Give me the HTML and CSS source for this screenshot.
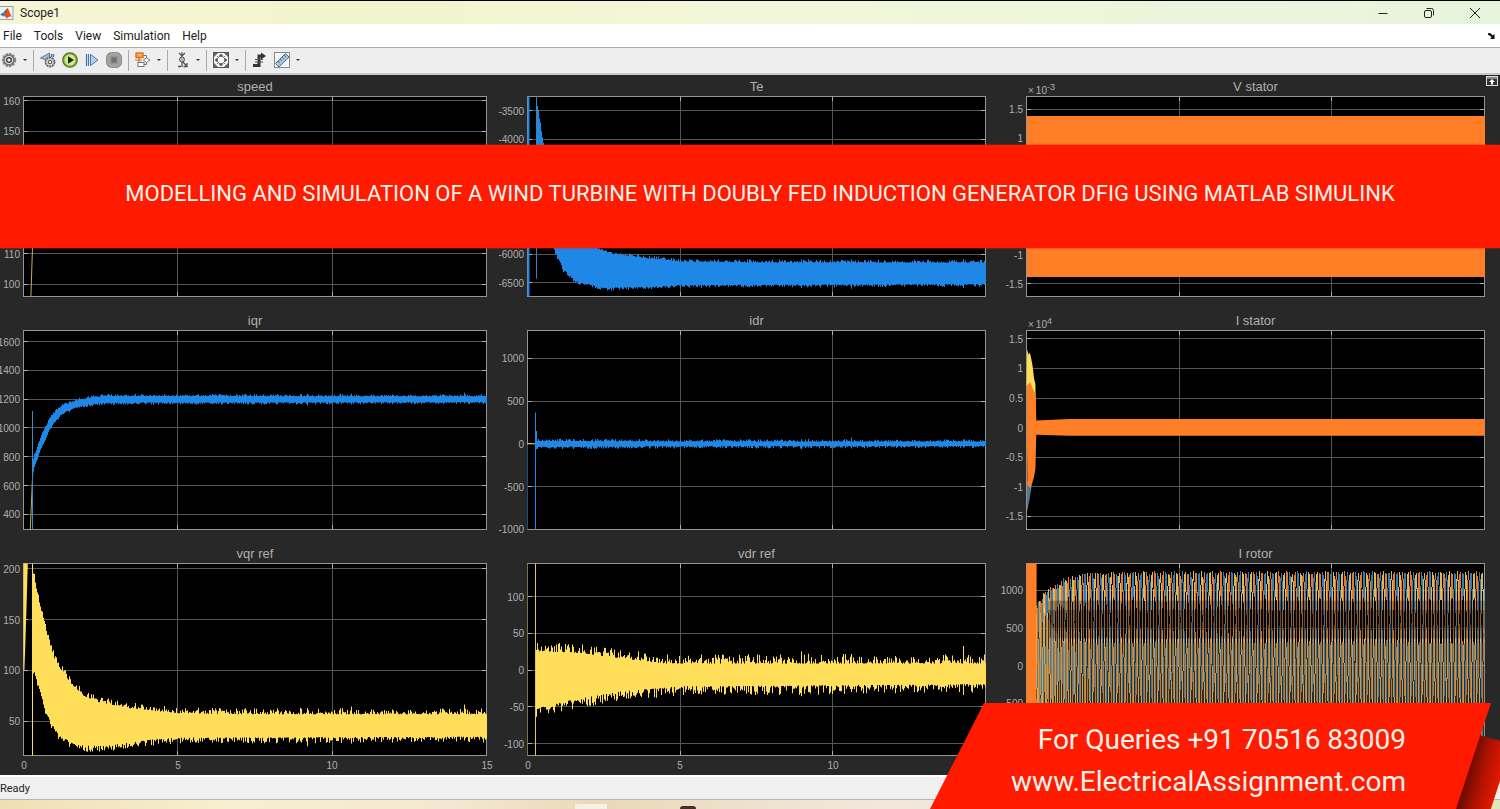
FILE: index.html
```html
<!DOCTYPE html>
<html lang="en">
<head>
<meta charset="utf-8">
<title>Scope1</title>
<link rel="stylesheet" href="styles.css">
</head>
<body>
<div class="window">
  <header class="titlebar">
    <svg class="app-icon" viewBox="0 0 14 14" aria-hidden="true"><rect x="-1" y=".5" width="14" height="13" fill="#eef2f6" stroke="#8fa3b8"/><path d="M0 8.500L4 6l2 2-2.500 2.500z" fill="#3d7fc0"/><path d="M4 6l3.500-4L6 8z" fill="#6b3a2a"/><path d="M7.500 2c1.500 1.500 2.500 6 4.500 9-2-1-3-.5-5 1.500L4 9.500z" fill="#d9541e"/></svg>
    <h1 class="window-title">Scope1</h1>
    <div class="window-controls">
      <button class="control" aria-label="Minimize"><svg viewBox="0 0 12 12"><path d="M1.500 6.500h9"/></svg></button>
      <button class="control" aria-label="Restore"><svg viewBox="0 0 12 12"><rect x="1.500" y="3.500" width="7" height="7" rx="1.500"/><path d="M3.500 1.500h5a2 2 0 0 1 2 2v5"/></svg></button>
      <button class="control" aria-label="Close"><svg viewBox="0 0 12 12"><path d="M1 1l10 10M11 1L1 11"/></svg></button>
    </div>
  </header>
  <nav class="menubar">
    <button class="menu">File</button>
    <button class="menu">Tools</button>
    <button class="menu">View</button>
    <button class="menu">Simulation</button>
    <button class="menu">Help</button>
    <button class="dock" aria-label="Dock window"><svg viewBox="0 0 8 8"><path d="M0 1.500c2-1 3.500 0 4.500 2L6.500 2v5H2l1.500-1.500C2.500 4 1.500 3 0 3z" fill="#111"/></svg></button>
  </nav>
  <div class="toolbar" role="toolbar" aria-label="Scope tools">
    <button class="tool" aria-label="Configuration"><svg viewBox="0 0 16 16" fill="none"><circle cx="8" cy="8" r="6.300" stroke="#888" stroke-width="1.800" stroke-dasharray="2.600 1"/><circle cx="8" cy="8" r="5" fill="#ddd" stroke="#6a6a6a" stroke-width="1.500"/><circle cx="8" cy="8" r="2.300" fill="#f4f4f4" stroke="#444" stroke-width="1.400"/></svg></button>
    <button class="caret" aria-label="Configuration options"></button>
    <span class="divider"></span>
    <button class="tool" aria-label="Step back options"><svg viewBox="0 0 16 16" fill="none"><path d="M9.500 1v8L.5 6z" fill="#9dbbd8" stroke="#557b9e"/><path d="M11.500 2v3M13.500 2v3" stroke="#557b9e" stroke-width="1.500"/><circle cx="10" cy="10" r="4.500" fill="#ddd" stroke="#666" stroke-width="1.800" stroke-dasharray="2.200 .6"/><circle cx="10" cy="10" r="1.800" fill="#fff" stroke="#444"/></svg></button>
    <button class="tool" aria-label="Run"><svg viewBox="0 0 16 16"><circle cx="8" cy="8" r="7.200" fill="#8db53c" stroke="#59751f" stroke-width="1.300"/><circle cx="8" cy="8" r="5.400" fill="#d3e7a0"/><path d="M6 4.300v7.400L12 8z" fill="#1c2b10"/></svg></button>
    <button class="tool" aria-label="Step forward"><svg viewBox="0 0 16 16"><path d="M2.500 2v12M4.500 2v12" stroke="#4478ad" stroke-width="1.200"/><path d="M6.500 2.500v11L14 8z" fill="#b6d3ee" stroke="#4478ad"/></svg></button>
    <button class="tool" aria-label="Stop" disabled><svg viewBox="0 0 16 16"><rect x=".5" y=".5" width="15" height="15" rx="5" fill="#a2a2a2" stroke="#8c8c8c"/><rect x="5" y="5" width="6" height="6" fill="#707070" stroke="#8d8d8d"/></svg></button>
    <span class="divider"></span>
    <button class="tool" aria-label="Highlight block"><svg viewBox="0 0 16 16" fill="none"><path d="M8 3.500h3.500v3M9 12.500h2.500V10" stroke="#777"/><rect x="1" y="1" width="7" height="4.500" fill="#f6a75c" stroke="#d9701a" stroke-width="1.300"/><path d="M0 8h7M4 6v4" stroke="#d9701a" stroke-width="1.200"/><path d="M8.500 8l3-2 3.500 2-3.500 2.500z" fill="#fff" stroke="#777"/><rect x="3" y="10.500" width="6" height="4" fill="#fff" stroke="#777"/></svg></button>
    <button class="caret" aria-label="Highlight options"></button>
    <span class="divider"></span>
    <button class="tool" aria-label="Triggers"><svg viewBox="0 0 16 16" fill="none" stroke="#555"><path d="M5 1l3 3 3-3M8 0v5" stroke-width="1.200"/><circle cx="8" cy="7.500" r="2.500" fill="#bbb"/><path d="M8 10v5M4 14.500h3M9 10l4 4.500M13 11v3.500h-3.500" stroke-width="1.300"/></svg></button>
    <button class="caret" aria-label="Trigger options"></button>
    <span class="divider"></span>
    <button class="tool" aria-label="Scale axes"><svg viewBox="0 0 16 16"><rect x=".5" y=".5" width="15" height="15" fill="#f4f4f4" stroke="#555"/><path d="M1 1h4L1 5zM15 1v4l-4-4zM1 15v-4l4 4zM15 15h-4l4-4z" fill="#666"/><path d="M8 2l2 2.500H6zM8 14l2-2.500H6zM2 8l2.500-2v4zM14 8l-2.500-2v4zM4 4l2 2M12 4l-2 2M4 12l2-2M12 12l-2-2" fill="#444" stroke="#666" stroke-width=".8"/></svg></button>
    <button class="caret" aria-label="Scale options"></button>
    <span class="divider"></span>
    <button class="tool" aria-label="Signal measurements"><svg viewBox="0 0 16 16" fill="none"><path d="M1 13.500h6V4h4" stroke="#333" stroke-width="3"/><path d="M9 .5L14 4 9 7.500z" fill="#333"/><path d="M3 7.500h8M3 10h8" stroke="#555"/></svg></button>
    <button class="tool" aria-label="Cursor measurements"><svg viewBox="0 0 16 16"><rect x=".5" y=".5" width="15" height="15" fill="#f5f5f5" stroke="#888"/><path d="M1.500 11.500l10-10 3.500 3.500-10 10z" fill="#a9c4df" stroke="#4c6f92"/><path d="M4 9l2 2M6 7l2 2M8 5l2 2M10 3l2 2" stroke="#4c6f92"/></svg></button>
    <button class="caret" aria-label="Measurement options"></button>
  </div>
  <main class="scope">
    <section class="cell"><h2 class="plot-title">speed</h2><svg class="plot" data-plot="speed" role="img" aria-label="speed"></svg></section>
    <section class="cell"><h2 class="plot-title">Te</h2><svg class="plot" data-plot="te" role="img" aria-label="Te"></svg></section>
    <section class="cell"><h2 class="plot-title">V stator</h2><svg class="plot" data-plot="vstator" role="img" aria-label="V stator"></svg></section>
    <section class="cell"><h2 class="plot-title">iqr</h2><svg class="plot" data-plot="iqr" role="img" aria-label="iqr"></svg></section>
    <section class="cell"><h2 class="plot-title">idr</h2><svg class="plot" data-plot="idr" role="img" aria-label="idr"></svg></section>
    <section class="cell"><h2 class="plot-title">I stator</h2><svg class="plot" data-plot="istator" role="img" aria-label="I stator"></svg></section>
    <section class="cell"><h2 class="plot-title">vqr ref</h2><svg class="plot" data-plot="vqr" role="img" aria-label="vqr ref"></svg></section>
    <section class="cell"><h2 class="plot-title">vdr ref</h2><svg class="plot" data-plot="vdr" role="img" aria-label="vdr ref"></svg></section>
    <section class="cell"><h2 class="plot-title">I rotor</h2><svg class="plot" data-plot="irotor" role="img" aria-label="I rotor"></svg></section>
    <button class="maximize" aria-label="Maximize axes"><svg viewBox="0 0 12 10"><rect x=".5" y=".5" width="11" height="9" fill="#333" stroke="#ddd"/><path d="M1 2h10" stroke="#ddd"/><path d="M6 3l3 3H7v2.500H5V6H3z" fill="#fff"/></svg></button>
    <p class="banner">MODELLING AND SIMULATION OF A WIND TURBINE WITH DOUBLY FED INDUCTION GENERATOR DFIG USING MATLAB SIMULINK</p>
  </main>
  <footer class="statusbar">Ready</footer>
  <div class="taskbar"><span class="task-tile"></span><span class="task-dot"></span></div>
  <aside class="contact">
    <span class="fold"></span>
    <div class="ribbon">
      <p>For Queries +91 70516 83009</p>
      <a href="#">www.ElectricalAssignment.com</a>
    </div>
  </aside>
</div>
<script src="scope.js"></script>
</body>
</html>
```
FILE: styles.css
```css
* { box-sizing: border-box; }
body { margin: 0; overflow: hidden; font-family: Roboto, "Open Sans", sans-serif; font-size: 12px; color: #222; }
h1, h2, p { margin: 0; font-weight: 400; }
button { margin: 0; padding: 0; border: 0; background: none; font: inherit; color: inherit; }
svg { display: block; }

.window { position: relative; display: flex; flex-direction: column; height: 100vh; min-height: 480px; overflow: hidden; }

.titlebar { display: flex; align-items: center; height: 24px; border-top: 1px solid #000; background: linear-gradient(90deg, #f6f5d6, #f1f5cb 22%, #f3f7da 50%, #e6f4dc); }
.app-icon { width: 14px; height: 14px; }
.window-title { margin-left: 6px; font-size: 12px; }
.window-controls { display: flex; gap: 34px; margin-left: auto; padding-right: 19px; }
.control { width: 12px; height: 12px; }
.control svg { width: 12px; height: 12px; fill: none; stroke: #222; }

.menubar { display: flex; align-items: center; gap: 12px; height: 23px; padding: 0 4px 0 3px; background: #fff; }
.dock { width: 8px; height: 8px; margin-left: auto; }

.toolbar { display: flex; align-items: center; gap: 6px; height: 28px; padding: 0 1px 1px; border-top: 1px solid #aaa; border-bottom: 2px solid #c9c9c9; background: #eee; }
.tool, .tool svg { width: 16px; height: 16px; }
.caret { width: 4px; height: 16px; display: grid; place-items: center; }
.caret::before { content: ""; border: 2px solid transparent; border-top-color: #333; border-bottom: 0; }
.divider { width: 1px; height: 21px; background: #aaa; }

.scope { position: relative; flex: 1; min-height: 0; display: grid; grid-template-columns: 464fr 459fr 459fr; grid-template-rows: 218fr 217fr 210fr; gap: 16px 40px; padding: 4px 15px 19px 23px; background: #282828; }
.cell { display: flex; flex-direction: column; min-width: 0; min-height: 0; }
.plot-title { height: 17px; line-height: 16px; text-align: center; font-family: "Liberation Sans", sans-serif; font-size: 13px; color: #afafaf; }
.plot { flex: 1; width: 100%; min-height: 0; overflow: visible; font-family: "Liberation Sans", sans-serif; font-size: 10px; }
.plot text { fill: #afafaf; }
.plot .exponent { font-size: 10px; }
.plot .power { font-size: 9px; }
.maximize { position: absolute; top: 1px; right: 2px; width: 12px; height: 10px; }

.banner { position: absolute; top: 70px; left: 0; right: 0; height: 103px; display: flex; align-items: center; justify-content: center; padding: 0 0 6px 20px; background: #ff1a00; box-shadow: 0 0 2px #ff1a00; color: #fff3ec; font-size: 22px; white-space: nowrap; }

.statusbar { height: 25px; line-height: 23px; border-top: 2px solid #fff; border-bottom: 1px solid #b5b5b5; background: #f0f0f0; font-size: 11px; }
.taskbar { display: flex; align-items: flex-end; height: 9px; background: linear-gradient(90deg, #f0dfb4, #f7efcf 15%, #f4e8d2 30%, #ead9b8 40%, #f0e6d8 55%, #f3efe4 80%, #dfe9b5); }
.task-tile { width: 32px; height: 5px; margin-left: 575px; background: #f8f0e4; }
.task-dot { width: 16px; height: 3px; margin-left: 73px; border-radius: 8px 8px 0 0; background: #4b2c2c; }

.contact { position: absolute; right: 0; bottom: 0; width: 570px; height: 106px; }
.fold { position: absolute; right: 0; bottom: 0; width: 46px; height: 74px; background: linear-gradient(105deg, #6b0a00 35%, #b01200 60%, #e81a00 90%); clip-path: polygon(55% 0, 100% 8%, 100% 62%, 80% 100%, 0 100%); }
.ribbon { position: absolute; left: 0; bottom: 0; width: 561px; height: 106px; display: flex; flex-direction: column; align-items: flex-end; padding: 16px 85px 0 0; background: #ff1a00; clip-path: polygon(54px 0, 100% 0, 526px 100%, 0 100%); color: #fff3ec; font-size: 28px; line-height: 42px; }
.ribbon a { color: inherit; text-decoration: none; }
```
FILE: scope.js
```js
const BLUE = "#1f87e5", YELLOW = "#ffdf5a", ORANGE = "#ff7f27";
const X_MAX = 15;
const BURSTS = [8.95, 9.2, 10.6, 14.27];

const plots = {
  speed: { range: [96, 161.4], ticks: [100, 110, 120, 130, 140, 150, 160], labels: [100, 110, 150, 160], draw: p => p.line([[0.24, 96], [0.3, 115], [0.31, 140]], "#c9a95a") },
  te: {
    range: [-6741, -3252], ticks: [-6500, -6000, -5500, -5000, -4500, -4000, -3500], labels: [-6500, -6000, -4000, -3500],
    draw: p => {
      p.bar(0.03, -3252, -6741, BLUE, 2);
      p.bar(0.29, -3252, -6430, "#3f7fb5", 1);
      p.band([[0.3, -3380], [0.51, -4090], [1, -5300], [1.5, -5700], [2.15, -5880], [2.7, -5990], [4, -6080], [5, -6130], [7, -6145], [15, -6150]],
        [[0.3, -4200], [0.51, -5000], [0.84, -5890], [1.16, -6260], [1.56, -6470], [2.5, -6590], [4, -6570], [5, -6540], [15, -6525]], BLUE, 50);
    }
  },
  vstator: { range: [-1.72, 1.72], ticks: [-1.5, -1, -0.5, 0, 0.5, 1, 1.5], labels: [-1.5, -1, 1, 1.5], power: "-3", draw: p => p.band([[0, 1.387], [15, 1.387]], [[0, -1.387], [15, -1.387]], ORANGE, 0) },
  iqr: {
    range: [294, 1678], ticks: [400, 600, 800, 1000, 1200, 1400, 1600],
    draw: p => {
      p.line([[0.22, 294], [0.3, 700]], "#b9b36a");
      p.bar(0.3, 1118, 294, "#4287bd", 1);
      p.band([[0.3, 780], [0.55, 940], [0.86, 1075], [1.2, 1150], [1.67, 1190], [2.15, 1212], [2.7, 1222], [15, 1220]],
        [[0.3, 705], [0.55, 855], [0.86, 1005], [1.2, 1095], [1.67, 1145], [2.15, 1166], [2.7, 1176], [15, 1180]], BLUE, 15);
    }
  },
  idr: {
    range: [-1002, 1325], ticks: [-1000, -500, 0, 500, 1000],
    draw: p => {
      p.bar(0, -10, -1000, "#174f86", 1);
      p.line([[0, 0], [0.27, 0]], "#d8c36c");
      p.bar(0.27, 365, -1000, BLUE, 1);
      p.bar(0.3, 150, -60, BLUE, 1);
      p.band([[0.3, 33], [5, 27], [15, 25]], [[0.3, -35], [5, -27], [15, -25]], BLUE, 28);
    }
  },
  istator: {
    range: [-1.72, 1.64], ticks: [-1.5, -1, -0.5, 0, 0.5, 1, 1.5], power: "4",
    draw: p => {
      p.area([[0, -0.9], [0.02, -1.42], [0.1, -1.2], [0.2, -0.9]], "#4d7797");
      p.area([[0, 0.5], [0.02, 1.32], [0.07, 1.23], [0.11, 1.27], [0.16, 1.15], [0.2, 1.04], [0.25, 0.82], [0.29, 0.74], [0.3, 0.3]], YELLOW);
      p.area([[0, 0.7], [0.12, 0.77], [0.2, 0.67], [0.3, 0.55], [0.32, 0.12], [1.4, 0.145], [15, 0.145], [15, -0.138], [1.4, -0.138], [0.32, -0.12], [0.29, -0.7], [0.24, -0.85], [0.12, -1.02], [0.03, -0.98]], ORANGE);
      p.bar(0, 0.7, -1.4, "#a09078", 1);
    }
  },
  vqr: {
    range: [16.5, 205], ticks: [50, 100, 150, 200], xLabels: [0, 5, 10, 15],
    draw: p => {
      p.area([[0, 100], [0, 205], [0.14, 205], [0.1, 165], [0.06, 128], [0.03, 100]], YELLOW);
      p.bar(0.3, 205, 16.5, YELLOW, 1);
      p.band([[0.31, 194], [0.55, 160], [0.8, 130], [1.03, 108], [1.5, 88], [1.94, 75], [2.5, 68], [3.4, 63], [5, 58], [7, 57], [15, 57]],
        [[0.31, 102], [0.44, 88], [0.7, 62], [0.9, 48], [1.03, 41], [1.25, 34], [1.67, 28], [2, 26], [2.64, 26], [3.4, 29], [4.1, 32], [5, 34], [15, 35]], YELLOW, 6);
    }
  },
  vdr: {
    range: [-116, 145], ticks: [-100, -50, 0, 50, 100], xLabels: [0, 5, 10],
    draw: p => {
      p.bar(0, 145, -116, "#7d7244", 1);
      p.bar(0.27, 145, -116, "#e0c65a", 1);
      p.band([[0.27, 26], [1.8, 23], [3, 16], [4.5, 9], [15, 9]], [[0.27, -52], [1.5, -40], [3, -29], [5, -22], [15, -19]], YELLOW, 13);
    }
  },
  irotor: {
    range: [-1190, 1355], ticks: [-1000, -500, 0, 500, 1000], labels: [-500, 0, 500, 1000],
    draw: p => {
      const waves = [[], [], []];
      const step = 0.021;
      let phase = 0;
      for (let t = 0.3; t <= X_MAX; t += step) {
        const size = 1250 - 440 * Math.exp(-(t - 0.3) / 0.6);
        phase += 2 * Math.PI * step * (3.7 + 5 * Math.exp(-(t - 0.3) / 0.6));
        waves.forEach((wave, k) => wave.push([t, size * Math.sin(phase + k * 2 * Math.PI / 3)]));
      }
      p.line(waves[1], "#2c7fc0", 'shape-rendering="crispEdges"');
      p.line(waves[2], "#e8782c", 'shape-rendering="crispEdges"');
      p.line(waves[0], "#ffdc62", 'shape-rendering="crispEdges" stroke-opacity=".85"');
      p.area([[0.7, 360], [0.7, 860], [15, 860], [15, 360]], "rgba(20,14,20,.3)");
      p.area([[0.7, 480], [0.7, 740], [15, 740], [15, 480]], "rgba(20,14,20,.3)");
      p.area([[0.35, 850], [0.35, -1190], [15, -1190], [15, 300], [1.2, 300]], "rgba(125,112,90,.4)");
      p.area([[0, 1355], [0.33, 1355], [0.33, -1190], [0, -1190]], ORANGE);
    }
  }
};

function randomSource(seed) {
  return () => {
    seed = (seed * 1664525 + 1013904223) >>> 0;
    return seed / 4294967296;
  };
}

function interpolate(points, t) {
  for (let i = 1; i < points.length; i++) {
    if (t <= points[i][0]) {
      const [t0, v0] = points[i - 1], [t1, v1] = points[i];
      return v0 + (v1 - v0) * (t - t0) / (t1 - t0);
    }
  }
  return points[points.length - 1][1];
}

function render(svg) {
  const plot = plots[svg.dataset.plot];
  const box = svg.getBoundingClientRect();
  const w = Math.round(box.width), h = Math.round(box.height);
  const [low, high] = plot.range;
  const x = t => 0.5 + t / X_MAX * (w - 1);
  const y = v => 0.5 + (high - v) / (high - low) * (h - 1);
  const snap = n => Math.floor(n) + 0.5;
  const out = [];
  const path = (d, attrs) => out.push(`<path d="${d}" ${attrs}/>`);
  const trace = points => points.map(([t, v]) => x(t).toFixed(1) + " " + y(v).toFixed(1)).join("L");

  out.push(`<rect width="${w}" height="${h}" fill="#000"/>`);
  const inner = plot.ticks.filter(v => y(v) < h - 2);
  let grid = "", marks = "";
  inner.forEach(v => {
    const gy = snap(y(v));
    grid += `M0 ${gy}H${w}`;
    marks += `M0 ${gy}h5M${w} ${gy}h-5`;
  });
  [5, 10].forEach(t => {
    const gx = snap(x(t));
    grid += `M${gx} 0V${h}`;
    marks += `M${gx} 0v5M${gx} ${h}v-5`;
  });
  path(grid, 'stroke="#545854"');
  path(marks, 'stroke="#afafaf"');
  out.push(`<rect x=".5" y=".5" width="${w - 1}" height="${h - 1}" fill="none" stroke="#959595"/>`);

  plot.draw({
    line: (points, color, extra = "") => path("M" + trace(points), `fill="none" stroke="${color}" ${extra}`),
    area: (points, color) => path("M" + trace(points) + "Z", `fill="${color}"`),
    bar: (t, top, bottom, color, width) => path(`M${snap(x(t))} ${y(top)}V${y(bottom)}`, `stroke="${color}" stroke-width="${width}"`),
    band: (upper, lower, color, noise) => {
      const random = randomSource(svg.dataset.plot.length * 977 + 31);
      const start = Math.round(x(upper[0][0]));
      let d = "";
      for (let px = start; px < w; px++) {
        const t = (px - 0.5) / (w - 1) * X_MAX;
        const burst = BURSTS.some(b => Math.abs(b - t) < 0.017) ? 1 : 0;
        const up = noise * (Math.pow(random(), 2.2) + burst);
        const down = noise * (Math.pow(random(), 2.2) + burst * 0.6);
        const top = y(interpolate(upper, t) + up), bottom = y(interpolate(lower, t) - down);
        d += `M${px} ${top.toFixed(1)}h1V${bottom.toFixed(1)}h-1z`;
      }
      path(d, `fill="${color}"`);
    }
  });

  (plot.labels || plot.ticks).forEach(v => out.push(`<text x="-3" y="${Math.round(y(v) + 4)}" text-anchor="end">${v}</text>`));
  (plot.xLabels || []).forEach(t => out.push(`<text x="${Math.round(x(t))}" y="${h + 13}" text-anchor="middle">${t}</text>`));
  if (plot.power) out.push(`<text class="exponent" x="2" y="-2">×<tspan dx="2">10</tspan><tspan class="power" dy="-4">${plot.power}</tspan></text>`);
  svg.innerHTML = out.join("");
}

function renderAll() {
  document.querySelectorAll(".plot").forEach(render);
}

renderAll();
window.addEventListener("resize", renderAll);
```
